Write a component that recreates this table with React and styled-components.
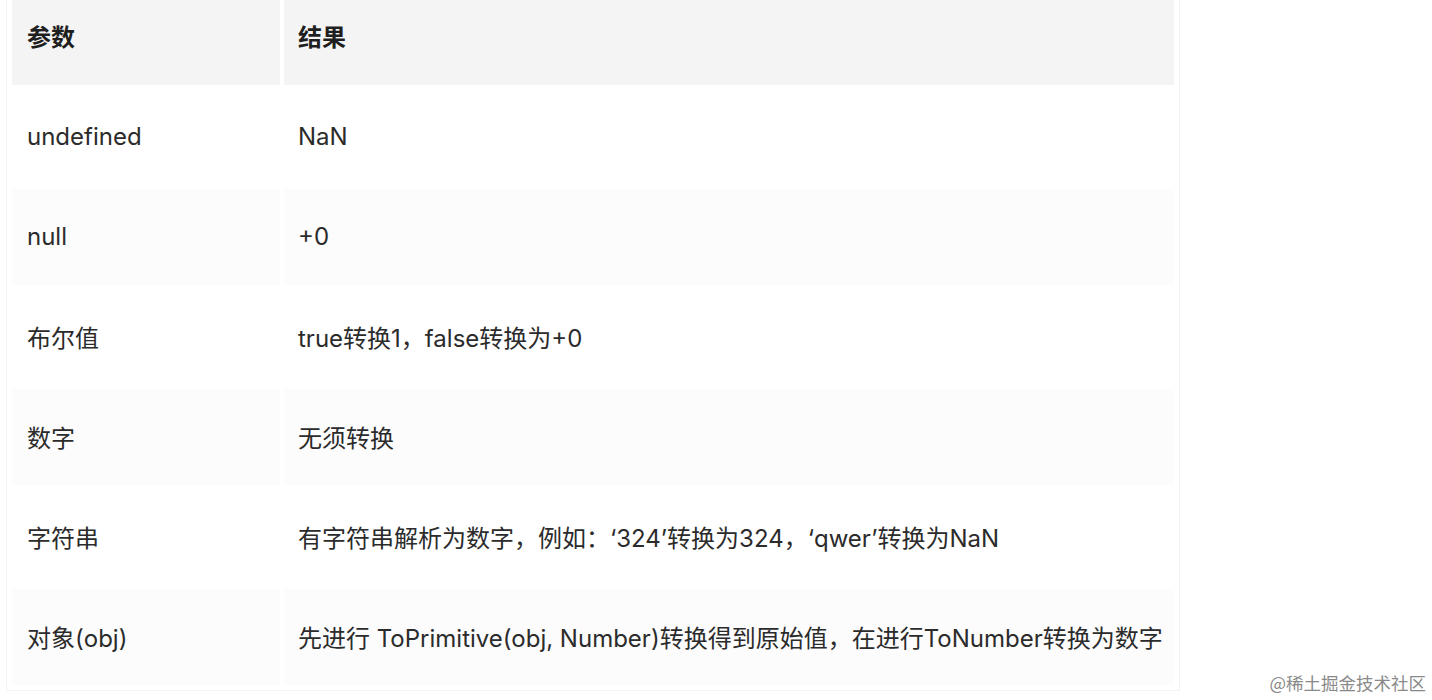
import React from 'react';
import styled, { createGlobalStyle } from 'styled-components';

const GlobalStyle = createGlobalStyle`
    html, body {
        margin: 0;
        padding: 0;
        background: #ffffff;
        overflow: hidden;
    }
`;

const rows = [
    ['undefined', 'NaN'],
    ['null', '+0'],
    ['布尔值', 'true转换1，false转换为+0'],
    ['数字', '无须转换'],
    ['字符串', '有字符串解析为数字，例如：‘324’转换为324，‘qwer’转换为NaN'],
    ['对象(obj)', '先进行 ToPrimitive(obj, Number)转换得到原始值，在进行ToNumber转换为数字'],
];

function App() {
    return (
        <Page>
            <GlobalStyle />
            <Table>
                <thead>
                    <tr>
                        <HeadCell $first>参数</HeadCell>
                        <HeadCell>结果</HeadCell>
                    </tr>
                </thead>
                <tbody>
                    {rows.map(([param, result], i) => (
                        <Row key={param} $striped={i % 2 === 1}>
                            <Cell $first>{param}</Cell>
                            <Cell>{result}</Cell>
                        </Row>
                    ))}
                </tbody>
            </Table>
            <Watermark>@稀土掘金技术社区</Watermark>
        </Page>
    );
}

const Page = styled.div`
    position: relative;
    display: flow-root;
    width: 1432px;
    height: 700px;
    padding-left: 6px;
    box-sizing: border-box;
    font-family: Inter, "Noto Sans CJK SC", sans-serif;
    color: #2b2b2b;
`;

const Table = styled.table`
    margin-top: -17px;
    border: 1px solid #f3f3f3;
    border-spacing: 4px;
    padding: 1px;
    table-layout: fixed;
`;

const HeadCell = styled.th`
    width: ${(p) => (p.$first ? '268px' : '890px')};
    height: 96px;
    box-sizing: border-box;
    padding: 0 0 4px ${(p) => (p.$first ? '15px' : '14px')};
    background: #f4f4f4;
    text-align: left;
    font-size: 24px;
    font-weight: 700;
    color: #1f1f1f;
`;

const Row = styled.tr`
    background: ${(p) => (p.$striped ? '#fcfcfc' : '#ffffff')};
`;

const Cell = styled.td`
    height: 96px;
    box-sizing: border-box;
    padding: 0 0 2px ${(p) => (p.$first ? '15px' : '14px')};
    font-size: 24px;
    white-space: nowrap;
    background: inherit;
`;

const Watermark = styled.div`
    position: absolute;
    right: 6px;
    bottom: 8px;
    font-family: "Noto Sans CJK SC", sans-serif;
    font-size: 17.5px;
    line-height: 18px;
    color: #8a8a8a;
`;

export default App;
